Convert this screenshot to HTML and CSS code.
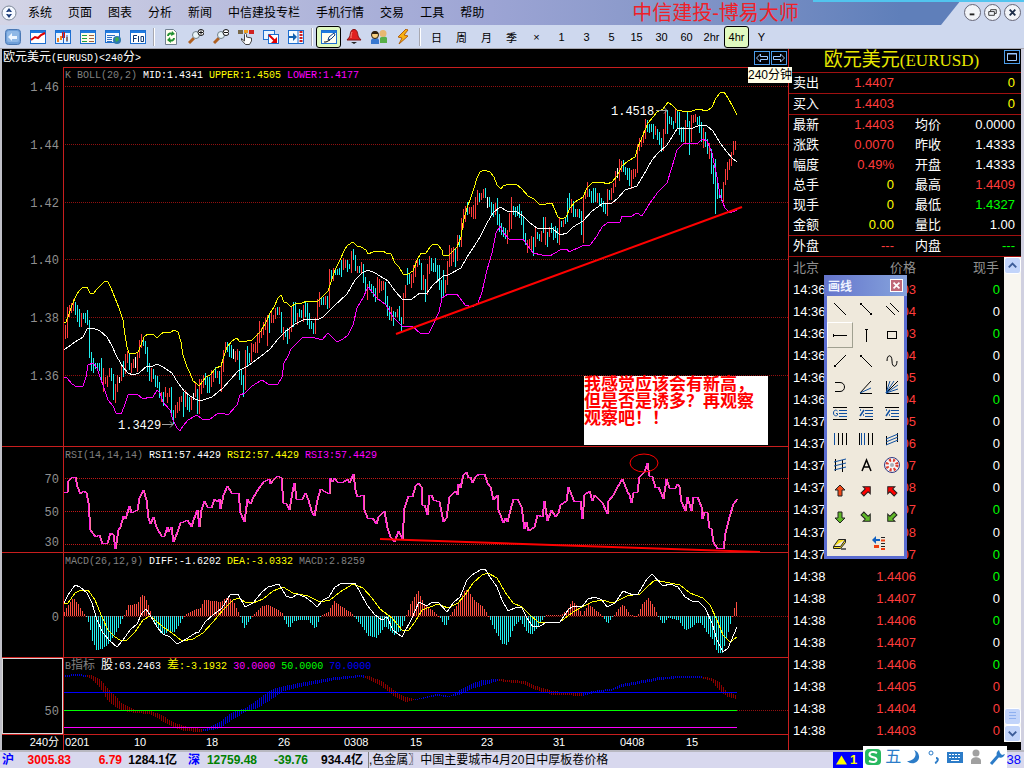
FILE: index.html
```html
<!DOCTYPE html>
<html lang="zh-CN">

<head>
    <meta charset="UTF-8">
    <meta name="viewport" content="width=device-width, initial-scale=1.0">
    <title>中信建投-博易大师</title>
    <link rel="stylesheet" href="styles.css">
</head>

<body>
    <header class="titlebar">
        <svg class="logo" viewBox="0 0 16 16"><circle cx="8" cy="8" r="7" fill="#f4f8ff" stroke="#7d8898"/><path d="M8 3l3 4H5zM8 13l3-4H5z" fill="#1a3a78"/><circle cx="8" cy="8" r="1.500" fill="#fff"/></svg>
        <nav class="menu">
            <a href="#">系统</a><a href="#">页面</a><a href="#">图表</a><a href="#">分析</a><a href="#">新闻</a><a href="#">中信建投专栏</a><a href="#">手机行情</a><a href="#">交易</a><a href="#">工具</a><a href="#">帮助</a>
        </nav>
        <h1 class="app-name">中信建投-博易大师</h1>
        <div class="win-buttons">
            <button type="button" aria-label="最小化"><svg viewBox="0 0 16 16"><path d="M5 10h5" stroke="#222" stroke-width="2"/></svg></button>
            <button type="button" aria-label="还原"><svg viewBox="0 0 16 16"><path d="M6 7V5h6v4h-2M4 7h6v4H4z" fill="none" stroke="#333"/></svg></button>
            <button type="button" aria-label="关闭"><svg viewBox="0 0 16 16"><path d="M5 5l6 6M11 5l-6 6" stroke="#1c2c48" stroke-width="2"/></svg></button>
        </div>
    </header>

    <div class="toolbar">
        <button type="button" aria-label="返回"><svg viewBox="0 0 16 16"><rect x=".5" y=".5" width="15" height="15" rx="3" fill="#6f9fd8" stroke="#4a78b4"/><rect x="2" y="2" width="12" height="11" rx="2" fill="#8fb8e6"/><path d="M3 8l4-4v3h5v3H7v2z" fill="#eef6ff"/></svg></button>
        <button type="button" aria-label="分时图"><svg viewBox="0 0 16 16"><rect x=".5" y="1.500" width="15" height="13" fill="#fff" stroke="#1e6fd0"/><path d="M1 2h14v2H1z" fill="#1e7be0"/><path d="M1 11l4-3 3 1 3-3 4-2" fill="none" stroke="#e00000" stroke-width="2"/></svg></button>
        <button type="button" aria-label="K线图"><svg viewBox="0 0 16 16"><rect x=".5" y="1.500" width="15" height="13" fill="#e8f4ff" stroke="#1e6fd0"/><path d="M1 2h14v2H1z" fill="#1e7be0"/><path d="M2 9h2v4H2zM5 7h2v4H5zM11 8h2v4h-2z" fill="#f08020"/><path d="M7 3h3v6H7z" fill="#e01010"/><path d="M8.500 2v12M12 6v7" stroke="#2060c0"/></svg></button>
        <button type="button" aria-label="报价列表"><svg viewBox="0 0 16 16"><rect x=".5" y="1.500" width="15" height="13" fill="#fffbe8" stroke="#1e6fd0"/><path d="M1 2h14v2H1z" fill="#1e7be0"/><path d="M2 6.500h5M2 9.500h5M2 12.500h5" stroke="#20a040"/><path d="M9 6.500h5M9 9.500h5M9 12.500h5" stroke="#a06040"/></svg></button>
        <button type="button" aria-label="资讯"><svg viewBox="0 0 16 16"><rect x=".5" y="1.500" width="14" height="12" fill="#f0f6ff" stroke="#1e6fd0"/><path d="M1 2h13v2H1z" fill="#1e7be0"/><path d="M2 6.500h8M2 8.500h5M2 10.500h5M2 12.500h5" stroke="#3070c0"/><circle cx="12" cy="11" r="4" fill="#2c78b0"/><path d="M10 9l3-1 1 3-3 2z" fill="#40b048"/></svg></button>
        <button type="button" aria-label="F10"><svg viewBox="0 0 16 16"><rect x=".5" y="1.500" width="15" height="13" fill="#fff" stroke="#1e6fd0"/><path d="M1 2h14v2H1z" fill="#1e7be0"/><path d="M3.500 13V6.500H7M3.500 9.500h3M8.500 7v6M11 7.500h2.500v5H11z" fill="none" stroke="#103870"/></svg></button>
        <span class="sep"></span>
        <button type="button" aria-label="刷新"><svg viewBox="0 0 16 16"><path d="M2.500.5h8l3 3v12h-11z" fill="#fffef0" stroke="#708090"/><path d="M5 7c0-3 3-3 5-2M11 9c0 3-3 3-5 2" fill="none" stroke="#209030" stroke-width="2"/><path d="M9 2l3 3-4 2zM7 8L4 11l4 3z" fill="#209030"/></svg></button>
        <button type="button" aria-label="放大"><svg viewBox="0 0 16 16"><path d="M1 14l5-5" stroke="#b06020" stroke-width="3"/><circle cx="8" cy="6" r="3.500" fill="#e8f4f8" stroke="#708088"/><circle cx="13" cy="3.500" r="3" fill="#fff" stroke="#111"/><path d="M11 3.500h4M13 1.500v4" stroke="#111"/></svg></button>
        <button type="button" aria-label="缩小"><svg viewBox="0 0 16 16"><path d="M1 14l5-5" stroke="#b06020" stroke-width="3"/><circle cx="8" cy="6" r="3.500" fill="#e8f4f8" stroke="#708088"/><circle cx="13" cy="3.500" r="3" fill="#fff" stroke="#111"/><path d="M11 3.500h4" stroke="#111"/></svg></button>
        <button type="button" aria-label="选择"><svg viewBox="0 0 16 16"><path d="M0 1h5v4H0z" fill="#786848"/><path d="M6 1h4v3H6z" fill="#f0a020"/><path d="M11 1h5v4h-5z" fill="#d02020"/><path d="M6.500 12V5.500c0-1.500 2-1.500 2 0V8l5 1v3l-2 3.500h-4L3.500 11V9.500z" fill="#fff" stroke="#444"/></svg></button>
        <button type="button" aria-label="弹出窗口"><svg viewBox="0 0 16 16"><rect x=".5" y="1.500" width="11" height="9" fill="#e8f4ff" stroke="#1e6fd0"/><rect x="5.500" y="5.500" width="10" height="9" fill="#fff" stroke="#1e6fd0"/><path d="M6 6l6 6" stroke="#e00000" stroke-width="2"/><path d="M14 8v6H8z" fill="#e00000"/></svg></button>
        <button type="button" aria-label="侧栏"><svg viewBox="0 0 16 16"><rect x=".5" y="1.500" width="15" height="13" fill="#f4faff" stroke="#1e6fd0"/><path d="M10 2v12" stroke="#1e6fd0"/><path d="M13 2v12" stroke="#d02020" stroke-width="3" stroke-dasharray="2 1"/><path d="M1 8h5" stroke="#1060b0" stroke-width="2"/><path d="M5 4l4 4-4 4z" fill="#1060b0"/></svg></button>
        <span class="sep"></span>
        <button type="button" class="active" aria-label="画线"><svg viewBox="0 0 16 16"><rect x=".5" y="1.500" width="15" height="13" fill="#fffef0" stroke="#1e6fd0"/><path d="M1 2h14v2H1z" fill="#1e7be0"/><path d="M3 13h2l4-2" fill="none" stroke="#111"/><path d="M7 11l1-3 5-4 1 2-4 4z" fill="#fff" stroke="#104080"/></svg></button>
        <button type="button" aria-label="预警"><svg viewBox="0 0 16 16"><path d="M8 .5c3 0 3.500 3 4 6 .3 2 2 3 3 4.500H1c1-1.500 2.700-2.500 3-4.500.5-3 1-6 4-6z" fill="#e02020" stroke="#801010"/><path d="M6 3c-1 2-1 4-1 6" stroke="#ff9080" fill="none"/><path d="M5 13h6l-3 2z" fill="#222"/></svg></button>
        <button type="button" aria-label="客户"><svg viewBox="0 0 16 16"><path d="M9 14V9c2-2 6-2 7 0v5z" fill="#58b048"/><circle cx="12" cy="4.500" r="3.500" fill="#e8b870"/><path d="M0 15V11c2-3 7-3 8 0v4z" fill="#3878d0"/><circle cx="4" cy="6" r="3.500" fill="#f8d080" stroke="#302010"/><path d="M.5 5c0-4 7-4 7 0z" fill="#302010"/></svg></button>
        <button type="button" aria-label="闪电下单"><svg viewBox="0 0 16 16"><path d="M10 0L2 8l4 1-3 6 9-8-4-1 4-5z" fill="#f8b010" stroke="#b06010"/></svg></button>
        <span class="sep"></span>
        <button type="button">日</button>
        <button type="button">周</button>
        <button type="button">月</button>
        <button type="button">季</button>
        <button type="button">×</button>
        <button type="button">1</button>
        <button type="button">3</button>
        <button type="button">5</button>
        <button type="button">15</button>
        <button type="button">30</button>
        <button type="button">60</button>
        <button type="button">2hr</button>
        <button type="button" class="active">4hr</button>
        <button type="button">Y</button>
    </div>

    <main class="workspace">
        <section class="charts">
            <div class="chart-title">
                <h2>欧元美元<span class="mono">(EURUSD)&lt;240</span>分<span class="mono">&gt;</span></h2>
                <button type="button" class="nav-btn" aria-label="上一周期"><svg viewBox="0 0 16 14"><rect x=".5" y=".5" width="15" height="13" fill="none" stroke="#4a9ce8"/><path d="M2.500 7l4-4v2.500h7v3h-7V11z" fill="none" stroke="#9cc8ff"/></svg></button>
                <button type="button" class="nav-btn" aria-label="下一周期"><svg viewBox="0 0 16 14"><rect x=".5" y=".5" width="15" height="13" fill="none" stroke="#4a9ce8"/><path d="M13.500 7l-4-4v2.500h-7v3h7V11z" fill="none" stroke="#9cc8ff"/></svg></button>
                <div class="tooltip">240分钟</div>
            </div>

            <div class="panel">
                <p class="legend"><span class="gray">K BOLL(20,2)</span> <span class="white">MID:1.4341</span> <span class="yellow">UPPER:1.4505</span> <span class="magenta">LOWER:1.4177</span></p>
                <svg id="kChart" viewBox="2 67 786 379"></svg>
                <div class="note">我感觉应该会有新高，<br>但是否是诱多？再观察<br>观察吧！！</div>
            </div>
            <div class="panel">
                <p class="legend"><span class="gray">RSI(14,14,14)</span> <span class="white">RSI1:57.4429</span> <span class="yellow">RSI2:57.4429</span> <span class="magenta">RSI3:57.4429</span></p>
                <svg id="rsiChart" viewBox="2 447 786 105"></svg>
            </div>
            <div class="panel">
                <p class="legend"><span class="gray">MACD(26,12,9)</span> <span class="white">DIFF:-1.6202</span> <span class="yellow">DEA:-3.0332</span> <span class="gray">MACD:2.8259</span></p>
                <svg id="macdChart" viewBox="2 553 786 104"></svg>
            </div>
            <div class="panel">
                <p class="legend"><span class="gray">B<b>指标</b></span> <span class="white"><b>股</b>:63.2463</span> <span class="yellow"><b>差</b>:-3.1932</span> <span class="magenta">30.0000</span> <span class="green">50.0000</span> <span class="blue">70.0000</span></p>
                <svg id="bChart" viewBox="2 658 786 76"></svg>
            </div>
            <div class="panel panel-time">
                <svg id="timeAxis" viewBox="2 735 786 15"></svg>
            </div>
        </section>

        <aside class="quote">
            <div class="quote-title">
                <h2>欧元美元<span>(EURUSD)</span></h2>
                <button type="button" class="max-btn" aria-label="最大化"><svg viewBox="0 0 16 14"><rect x=".5" y=".5" width="15" height="13" fill="none" stroke="#4a9ce8"/><path d="M3.500 3.500h9v7h-9z" fill="none" stroke="#9cc8ff"/><path d="M3 4h10" stroke="#9cc8ff"/></svg></button>
            </div>
            <table class="quote-table">
                <tr class="line"><th>卖出</th><td class="red">1.4407</td><th></th><td class="yellow">0</td></tr>
                <tr class="line"><th>买入</th><td class="red">1.4403</td><th></th><td class="yellow">0</td></tr>
                <tr><th>最新</th><td class="red">1.4403</td><th>均价</th><td>0.0000</td></tr>
                <tr><th>涨跌</th><td class="red">0.0070</td><th>昨收</th><td>1.4333</td></tr>
                <tr><th>幅度</th><td class="red">0.49%</td><th>开盘</th><td>1.4333</td></tr>
                <tr><th>总手</th><td class="yellow">0</td><th>最高</th><td class="red">1.4409</td></tr>
                <tr><th>现手</th><td class="yellow">0</td><th>最低</th><td class="green">1.4327</td></tr>
                <tr class="line"><th>金额</th><td class="yellow">0.00</td><th>量比</th><td>1.00</td></tr>
                <tr class="line"><th>外盘</th><td class="red">---</td><th>内盘</th><td class="green">---</td></tr>
            </table>

            <div class="ticks">
                <table class="tick-table">
                    <thead><tr><th>北京</th><th>价格</th><th>现手</th></tr></thead>
                    <tbody id="tickRows"></tbody>
                </table>
                <div class="scrollbar">
                    <button type="button" aria-label="向上滚动"><svg viewBox="0 0 16 16"><path d="M4 10l4-4 4 4" fill="none" stroke="#3c5c98" stroke-width="2"/></svg></button>
                    <div class="track"><div class="thumb"></div></div>
                    <button type="button" aria-label="向下滚动"><svg viewBox="0 0 16 16"><path d="M4 6l4 4 4-4" fill="none" stroke="#3c5c98" stroke-width="2"/></svg></button>
                </div>

                <div class="palette">
                    <div class="palette-title"><span>画线</span><button type="button" aria-label="关闭画线"><svg viewBox="0 0 13 13"><path d="M3 3l7 7M10 3l-7 7" stroke="#fff" stroke-width="2"/></svg></button></div>
                    <div class="palette-body" id="paletteBody"></div>
                </div>
            </div>
        </aside>
    </main>

    <footer class="statusbar">
        <b class="s-name">沪</b>
        <b class="s-up s-price">3005.83</b>
        <b class="s-up s-chg">6.79</b>
        <b class="s-amt">1284.1亿</b>
        <b class="s-name s-second">深</b>
        <b class="s-down s-price">12759.48</b>
        <b class="s-down s-chg">-39.76</b>
        <b class="s-amt">934.4亿</b>
        <span class="news">,色金属〗中国主要城市4月20日中厚板卷价格</span>
        <span class="alert"><svg viewBox="0 0 12 10"><path d="M6 0l6 10H0z" fill="#ff0"/></svg>1</span>
        <span class="clock">38</span>
        <div class="ime">
            <svg viewBox="0 0 18 18"><rect x="1" y="1" width="16" height="16" rx="4" fill="#28b860"/><path d="M13 5C9 3 5 4 5.500 7s7 1.500 7 4.500-4 3-7.500 1.500" fill="none" stroke="#fff" stroke-width="2"/></svg>
            <span>五</span>
            <svg viewBox="0 0 18 18"><path d="M10 2c4 5 0 11-7 11 5 5 13 1 12-5-.4-3-2-5-5-6z" fill="#2c7cc8"/></svg>
            <svg viewBox="0 0 18 18"><circle cx="6" cy="5" r="2" fill="none" stroke="#2c7cc8"/><path d="M11 10c3 0 2 4-1 5" fill="none" stroke="#2c7cc8" stroke-width="2"/></svg>
            <svg viewBox="0 0 18 18"><rect x="1" y="4" width="16" height="11" fill="#2c7cc8"/><path d="M3 6.500h12M3 9.500h12" stroke="#fff" stroke-dasharray="2 1"/><path d="M5 12.500h8" stroke="#fff"/></svg>
            <svg viewBox="0 0 18 18"><circle cx="9" cy="5" r="3.500" fill="#a0a0a0"/><path d="M4 16v-3c0-5 10-5 10 0v3z" fill="#a0a0a0"/></svg>
            <svg viewBox="0 0 18 18"><path d="M3 16l7-8" stroke="#2c7cc8" stroke-width="3"/><path d="M11 2c-3 2-3 5-1 7 3 2 6 0 7-3l-3 1-2-2z" fill="#2c7cc8"/></svg>
        </div>
    </footer>

    <script src="script.js"></script>
</body>

</html>
```

FILE: styles.css
```css
* {
    box-sizing: border-box;
}

body {
    margin: 0;
    height: 100vh;
    display: flex;
    flex-direction: column;
    overflow: hidden;
    background-color: #000;
    color: #000;
    font-family: "Liberation Sans", "Noto Sans CJK SC", sans-serif;
    font-size: 12px;
}

h1, h2, p {
    margin: 0;
    font-weight: normal;
}

button {
    border: none;
    padding: 0;
    background: none;
    font-family: inherit;
    font-size: 12px;
    cursor: pointer;
}

svg {
    display: block;
}

/* 标题栏 */
.titlebar {
    position: relative;
    flex: none;
    height: 25px;
    display: flex;
    align-items: center;
    padding-left: 1px;
    background: linear-gradient(to right, #d4d5e6 0, #c2c5e0 15%, #9ca4d4 48%, #8b9acb 62%, #5f7fba 88%);
}

.titlebar::after {
    content: "";
    position: absolute;
    top: 0;
    right: 0;
    width: 83px;
    height: 25px;
    background-color: #ced8ee;
    clip-path: polygon(20px 0, 100% 0, 100% 100%, 0 100%);
}

.titlebar::before {
    content: "";
    position: absolute;
    top: 0;
    right: 0;
    width: 211px;
    height: 2px;
    background-color: #52c4ee;
    z-index: 1;
}

.logo {
    width: 16px;
    height: 16px;
    margin-right: 11px;
}

.menu {
    display: flex;
    gap: 16px;
}

.menu a {
    color: #000;
    text-decoration: none;
    line-height: 24px;
}

.app-name {
    flex: 1;
    padding-left: 148px;
    color: #f02028;
    font-size: 20px;
    line-height: 24px;
    white-space: nowrap;
}

.win-buttons {
    position: relative;
    z-index: 1;
    display: flex;
    gap: 3px;
    padding-right: 3px;
}

.win-buttons button {
    width: 17px;
    height: 17px;
    border: 1px solid #667;
    border-radius: 50%;
    background-color: #f2f4f8;
}

/* 工具栏 */
.toolbar {
    flex: none;
    height: 24px;
    display: flex;
    align-items: center;
    background-color: #ced8ee;
    border-bottom: 1px solid #a8a8b0;
}

.toolbar button {
    flex: none;
    width: 25px;
    height: 22px;
    display: flex;
    align-items: center;
    justify-content: center;
    font-size: 11px;
}

.toolbar svg {
    width: 16px;
    height: 16px;
}

.toolbar .active {
    border: 1px solid #000;
    border-radius: 3px;
    background-color: #e0fac0;
}

.sep {
    flex: none;
    width: 8px;
    height: 18px;
    border-left: 3px solid transparent;
    background: linear-gradient(to right, #a8a8b0 1px, #fff 1px, #fff 2px, transparent 2px) no-repeat;
}

/* 主区域 */
.workspace {
    flex: 1;
    min-height: 0;
    display: flex;
    border-left: 2px solid #c0c0c8;
    border-right: 3px solid #d0d0e0;
}

.charts {
    flex: 1;
    min-width: 0;
    display: grid;
    grid-template-rows: 18px 380fr 106fr 105fr 77fr 15fr;
    border-right: 1px solid #c81e1e;
}

.chart-title {
    position: relative;
    display: flex;
    align-items: center;
    padding: 0 1px;
    color: #fff;
}

.chart-title h2 {
    flex: 1;
    font-size: 12px;
    line-height: 18px;
}

.mono {
    font-family: "Liberation Mono", monospace;
    font-size: 10px;
}

.nav-btn {
    width: 16px;
    height: 14px;
    margin-left: 1px;
}

.tooltip {
    position: absolute;
    top: 18px;
    right: -4px;
    z-index: 3;
    background-color: #ffffe8;
    color: #000;
    line-height: 16px;
}

.panel {
    position: relative;
    min-height: 0;
    border-bottom: 1px solid #c81e1e;
}

.panel svg {
    width: 100%;
    height: 100%;
}

.panel-time {
    border-bottom: none;
}

.legend {
    position: absolute;
    top: 2px;
    left: 63px;
    font-family: "Liberation Mono", "Noto Sans CJK SC", monospace;
    font-size: 10px;
    line-height: 14px;
    white-space: nowrap;
}

.legend b {
    font-size: 12px;
    font-weight: normal;
    line-height: 12px;
}

.gray { color: #808080; }
.white { color: #fff; }
.yellow { color: #ff0; }
.magenta { color: #f0f; }
.green { color: #0f0; }
.blue { color: #00f; }
.red { color: #ff3c3c; }

.note {
    position: absolute;
    right: 20px;
    bottom: 1px;
    width: 184px;
    height: 69px;
    background-color: #fff;
    color: #f00;
    font-size: 17px;
    font-weight: bold;
    line-height: 17px;
    white-space: nowrap;
}

.axis-text {
    font-family: "Liberation Mono", monospace;
    font-size: 12px;
    fill: #909090;
}

.time-text {
    font-family: "Liberation Sans", "Noto Sans CJK SC", sans-serif;
    font-size: 11px;
    fill: #fff;
}

/* 右侧报价 */
.quote {
    flex: none;
    width: 232px;
    display: flex;
    flex-direction: column;
    color: #fff;
}

.quote-title {
    flex: none;
    height: 24px;
    display: flex;
    border-bottom: 1px solid #a01010;
}

.quote-title h2 {
    flex: 1;
    padding-left: 10px;
    text-align: center;
    color: #e8e800;
    font-size: 19px;
    line-height: 22px;
}

.quote-title h2 span {
    font-family: "Liberation Serif", serif;
    font-size: 17px;
}

.max-btn {
    width: 16px;
    height: 14px;
    margin: 1px 1px 0 0;
}

.quote-table, .tick-table {
    border-collapse: separate;
    border-spacing: 0;
    table-layout: fixed;
    font-size: 13px;
    line-height: 16px;
}

.quote-table {
    width: 100%;
}

.quote-table th, .quote-table td {
    height: 20px;
    padding: 0;
}

.quote-table .line th, .quote-table .line td {
    height: 21px;
    border-bottom: 1px solid #a01010;
}

.quote-table th {
    width: 40px;
    padding-left: 4px;
    font-weight: normal;
    text-align: left;
}

.quote-table th:nth-child(3) {
    width: 66px;
    padding-left: 21px;
}

.quote-table td {
    text-align: right;
}

.quote-table td:nth-child(2) {
    width: 65px;
}

.quote-table td:last-child {
    padding-right: 6px;
}

.ticks {
    position: relative;
    flex: 1;
    min-height: 0;
    display: flex;
    padding-bottom: 8px;
}

.tick-table {
    flex: 1;
    height: 100%;
}

.tick-table th, .tick-table td {
    height: 22px;
    padding: 0;
    text-align: right;
}

.tick-table th {
    font-weight: normal;
    color: #909090;
}

.tick-table th:first-child, .tick-table td:first-child {
    width: 50px;
    padding-left: 4px;
    text-align: left;
}

.tick-table th:nth-child(2), .tick-table td:nth-child(2) {
    width: 77px;
}

.tick-table th:last-child {
    padding-right: 5px;
}

.tick-table td:last-child {
    padding-right: 4px;
}

.scrollbar {
    width: 17px;
    display: flex;
    flex-direction: column;
    background-color: #f8f6f0;
}

.scrollbar button, .thumb {
    flex: none;
    height: 17px;
    border: 1px solid #fff;
    border-radius: 3px;
    background-color: #c2d4fa;
}

.track {
    flex: 1;
    display: flex;
    flex-direction: column;
    justify-content: flex-end;
}

.thumb {
    background-image: repeating-linear-gradient(#8fb0f0 0 1px, transparent 1px 3px);
    background-size: 7px 9px;
    background-position: center;
    background-repeat: no-repeat;
}

/* 画线工具箱 */
.palette {
    position: absolute;
    top: 18px;
    left: 35px;
    width: 83px;
    border: 3px solid #5a6cd0;
    border-top: none;
    background-color: #efe9dc;
}

.palette-title {
    height: 21px;
    margin: 0 -3px;
    padding: 0 4px;
    display: flex;
    align-items: center;
    justify-content: space-between;
    background: linear-gradient(to right, #6474cc, #86a4dc);
    color: #eef2ff;
    font-weight: bold;
}

.palette-title button {
    width: 13px;
    height: 13px;
    border: 1px solid #fff;
    background-color: #c06878;
}

.palette-title svg {
    width: 11px;
    height: 11px;
}

.palette-body {
    display: grid;
    grid-template-columns: repeat(3, 26px);
    grid-auto-rows: 26px;
}

.palette-body button {
    display: flex;
    align-items: center;
    justify-content: center;
}

.palette-body button:nth-child(4) {
    border: 1px solid #fff;
    border-right-color: #a0a090;
    border-bottom-color: #a0a090;
}

.palette-body button:last-child {
    grid-column: span 2;
}

.palette-body svg {
    flex: none;
    width: 18px;
    height: 18px;
}

/* 状态栏 */
.statusbar {
    position: relative;
    flex: none;
    height: 18px;
    display: flex;
    align-items: center;
    padding-left: 2px;
    border-top: 2px solid #b8b8c0;
    background-color: #d8d8ee;
    line-height: 16px;
    white-space: nowrap;
}

.s-name { width: 14px; color: #00f; }
.s-second { margin-left: 11px; }
.s-up { color: #f00; }
.s-down { color: #008000; }
.s-price { width: 55px; text-align: right; }
.s-chg { width: 51px; text-align: right; }
.s-amt { width: 55px; text-align: right; }

.news {
    flex: 1;
    margin-left: 5px;
    border-left: 1px solid #808080;
}

.alert {
    width: 30px;
    height: 16px;
    display: flex;
    align-items: center;
    gap: 3px;
    padding-left: 3px;
    background-color: #00f;
    color: #ff0;
    font-size: 13px;
    font-weight: bold;
}

.alert svg {
    width: 11px;
    height: 10px;
}

.clock {
    width: 161px;
    padding-right: 3px;
    text-align: right;
    color: #00f;
    font-size: 13px;
}

.ime {
    position: absolute;
    right: 17px;
    bottom: 0;
    width: 144px;
    height: 22px;
    display: flex;
    align-items: center;
    justify-content: space-around;
    background-color: #fff;
    color: #2c7cc8;
    font-size: 16px;
}

.ime svg {
    width: 18px;
    height: 18px;
}
```

FILE: script.js
```js
const NS = 'http://www.w3.org/2000/svg';

function add(svg, tag, attrs, text) {
    const el = document.createElementNS(NS, tag);
    for (const k in attrs) el.setAttribute(k, attrs[k]);
    if (text) el.textContent = text;
    svg.appendChild(el);
    return el;
}

function polyline(svg, points, color) {
    return add(svg, 'polyline', { points: points, fill: 'none', stroke: color, 'shape-rendering': 'crispEdges' });
}

function grid(svg, y, color) {
    add(svg, 'path', { d: `M65 ${y}.5H788`, stroke: color, 'stroke-dasharray': '1 1', 'shape-rendering': 'crispEdges' });
}

function axis(svg, y1, y2) {
    add(svg, 'path', { d: `M63.5 ${y1}V${y2}`, stroke: '#c81e1e' });
}

function label(svg, x, y, text, anchor, cls) {
    return add(svg, 'text', { x: x, y: y, 'text-anchor': anchor, class: cls || 'axis-text' }, text);
}

function bar(svg, x, y1, y2, color) {
    add(svg, 'rect', { x: x, y: Math.min(y1, y2), width: 1, height: Math.max(1, Math.abs(y2 - y1)), fill: color });
}

// 在控制点之间线性插值
function interp(list, x, col) {
    for (let i = 1; i < list.length; i++) {
        if (x <= list[i][0]) {
            const a = list[i - 1], b = list[i];
            return a[col] + (b[col] - a[col]) * (x - a[0]) / (b[0] - a[0]);
        }
    }
    return list[list.length - 1][col];
}

// K线 r 涨 c 跌 w 平
const bars = `r325-339 r307-338 r305-317 r303-313 r299-311 c302-315 c305-322 c309-327 r313-327 c313-319 c313-323 c310-325
c320-358 c352-371 c358-373 c363-369 c363-368 c363-371 c358-383 r368-392 r377-384 r376-387 r368-377 c368-381 c374-400 r384-403
r375-392 w377-383 r365-381 c361-377 r354-374 r351-363 c353-370 r363-373 r359-368 w357-368 r352-372 r340-358 r334-348 c337-346
c341-354 c347-372 c363-381 r368-382 c369-379 c375-387 c376-388 c382-398 r392-402 c392-406 r387-397 r393-403 r388-397 c387-413
c410-424 r405-418 r402-413 r397-411 r396-402 c392-417 r390-407 c395-410 c397-412 r396-410 w393-400 r383-397 c389-414 r379-414
r379-394 r375-388 c373-385 c377-393 c377-393 r370-387 r370-382 c367-378 r371-378 c371-384 r363-392 r350-372 r342-353 c342-352
c344-357 c345-358 w349-359 r351-362 r349-360 c351-380 c370-385 c375-397 r350-390 c346-366 c353-363 r343-362 r344-352 r342-353
r333-353 r321-343 r328-338 r322-335 r318-330 r315-346 c313-333 r310-323 r315-323 r308-319 c307-315 r307-315 c312-333 r327-340
c330-337 c328-344 r327-339 r307-332 c302-327 c302-322 r313-325 c309-317 c310-318 r305-322 c302-317 c303-325 c313-329 c321-329
c323-334 r318-334 r299-320 r292-307 c297-305 c297-305 r296-305 c296-309 r269-308 c270-282 r268-281 c268-275 c269-275 c268-275
c260-277 r258-270 r260-268 c260-272 c264-269 r251-273 c249-260 c255-271 r266-273 c266-273 r262-273 c264-283 c277-293 r284-300
c281-290 c284-293 c286-297 c288-302 r277-300 r279-293 r281-291 r281-290 c282-305 c296-316 c306-320 r307-321 c311-326 c312-317
r309-317 c306-321 c317-332 r293-324 r285-298 c268-285 c274-284 r274-288 r265-283 r261-277 r258-267 c259-265 c263-290 r275-290
c279-302 r264-295 r256-274 c258-271 c263-272 c258-272 c265-280 c265-290 c280-298 c270-298 r280-293 r261-285 r245-267 r248-266
r247-262 c249-267 r235-261 c235-247 r218-247 r209-228 r206-222 c202-215 r207-214 r207-217 r205-219 r197-219 r190-205 c193-202
r193-200 r189-198 c188-198 w197-208 c197-207 c202-215 c204-217 r203-215 c198-225 c214-232 c223-235 c227-237 c228-239 r230-244
r213-232 r197-229 c206-215 c207-217 c206-216 c204-218 c211-225 c217-240 c233-245 r240-253 r239-248 r236-250 c237-256 r226-247
c232-239 c234-241 r231-242 c217-233 r217-245 c232-247 r227-237 c223-233 c227-240 c226-238 c228-243 r217-245 c221-227 r220-227
c217-224 c198-222 c193-209 r199-213 c201-217 c209-217 r209-217 c209-218 c211-235 r196-243 r190-199 r182-197 c189-197 c191-203
c188-203 c188-202 r193-203 c193-205 c198-207 c201-212 c204-214 r189-216 c190-200 r188-200 r183-193 r171-187 w168-178 r159-181
r161-172 c160-172 c167-175 c168-180 c168-186 r170-189 r169-179 r169-177 r144-173 r138-151 r138-147 r131-143 r119-139 c120-132
c124-133 c124-132 c124-139 r126-135 c129-140 c132-145 c138-152 r129-151 r110-134 c110-134 c116-124 c117-125 c121-129 r109-123
c110-128 c112-135 c127-142 c127-142 r120-143 c112-127 c121-155 r115-142 r115-123 r114-122 c117-125 c116-133 c122-142 r128-148
c132-147 c139-154 r143-159 c149-174 c165-184 c159-214 c183-199 c190-198 c189-201 r182-202 r169-185 r162-180 r159-170 r152-166
r141-155 r141-150`.split(/\s+/);

const upper = '64,323 66,322 69,314 72,305 76,296 79,291 83,287 87,287 90,293 94,293 97,289 101,285 105,281 108,282 111,288 115,298 119,308 123,320 125,335 127,347 129,353 134,354 138,352 141,345 144,337 148,334 153,334 157,338 160,335 164,332 171,332 174,330 178,332 181,342 183,355 187,367 190,373 193,381 197,384 199,386 203,381 206,377 210,375 216,368 221,366 223,359 227,347 232,341 237,338 240,342 247,341 252,340 257,335 261,331 266,322 270,313 274,307 278,298 281,295 284,302 287,303 291,307 295,304 302,303 307,301 318,301 323,296 328,291 331,282 335,270 340,260 345,249 348,245 353,242 357,246 361,247 366,250 368,254 373,252 377,251 383,251 386,253 391,254 395,263 399,267 403,274 408,274 413,271 417,260 421,253 426,253 430,247 433,244 438,245 442,250 443,255 448,256 453,251 457,247 461,237 463,223 467,208 471,197 474,188 477,178 480,172 484,170 490,172 494,177 497,185 501,189 503,186 509,184 516,184 522,189 528,196 534,199 540,205 552,203 554,208 558,217 562,219 566,217 570,208 575,202 583,197 587,188 592,183 602,182 607,184 612,182 617,176 622,166 628,161 635,157 638,147 643,135 648,123 653,117 657,112 663,109 668,102 673,106 677,110 682,111 692,111 698,109 707,111 712,107 716,98 720,93 724,92 728,98 733,107 737,115';
const middle = '64,350 68,347 75,342 83,337 87,329 93,328 100,331 107,337 112,346 117,357 123,367 128,373 133,375 139,373 147,366 153,366 157,364 163,367 172,373 178,383 185,392 193,398 200,401 212,397 223,388 230,380 238,371 248,366 260,357 270,349 278,339 285,332 295,324 305,319 317,320 323,317 333,307 347,294 355,280 362,273 368,270 375,273 380,276 388,281 395,291 403,300 412,299 420,293 427,293 433,285 443,276 448,275 461,268 467,257 473,248 480,237 487,223 493,213 500,207 507,211 517,212 523,216 530,223 537,228 545,229 552,228 560,235 567,233 573,227 583,221 592,211 602,204 612,203 618,198 625,190 637,186 643,176 652,160 658,153 667,145 677,129 682,128 693,128 700,125 707,126 713,131 720,143 727,152 732,158 737,162';
const lower = '64,377 67,378 72,384 77,387 83,386 86,377 88,365 93,363 97,368 100,377 104,388 108,400 113,406 116,413 121,414 124,407 128,395 137,394 143,399 150,397 153,397 157,390 160,393 163,402 170,410 173,420 177,428 180,431 183,426 188,420 197,415 202,419 209,420 217,414 222,413 228,415 237,405 240,395 245,393 252,386 262,380 268,384 278,384 282,377 284,363 288,356 291,349 297,343 303,337 312,337 322,340 328,333 337,342 343,339 348,335 353,325 357,308 363,298 368,287 373,293 377,298 386,305 393,317 402,326 413,327 420,333 429,333 433,325 439,312 442,298 448,294 457,294 465,305 472,307 478,303 482,292 487,270 492,253 496,233 500,226 503,232 509,239 523,239 528,246 533,253 542,255 550,256 560,250 567,249 569,252 582,246 590,245 597,236 602,227 607,223 620,222 622,216 632,216 637,213 642,216 650,203 658,192 667,183 672,167 677,150 683,144 698,143 702,139 707,141 712,153 717,177 720,195 725,208 730,213 737,210';

const k = document.getElementById('kChart');
add(k, 'path', { d: 'M63 67.5H788', stroke: '#c81e1e' });
axis(k, 67, 446);
['1.46', '1.44', '1.42', '1.40', '1.38', '1.36'].forEach((t, i) => {
    const y = [86, 144, 202, 259, 317, 375][i];
    grid(k, y, '#901010');
    label(k, 59, y + 5, t, 'end');
});
bars.forEach((b, i) => {
    const [hi, lo] = b.slice(1).split('-').map(Number);
    bar(k, 65 + i * 2, hi, lo, { r: '#ff3c3c', c: '#20f0f0', w: '#fff' }[b[0]]);
});
polyline(k, upper, '#ff0');
polyline(k, lower, '#f0f');
polyline(k, middle, '#fff');
label(k, 118, 429, '1.3429', 'start').style.fill = '#fff';
label(k, 611, 115, '1.4518', 'start').style.fill = '#fff';
add(k, 'path', { d: 'M162 424.5h11m-3-3l3 3-3 3M656 110.5h11m-3-3l3 3-3 3', fill: 'none', stroke: '#a0a0a0' });
add(k, 'path', { d: 'M396 334L742 207', stroke: '#f00', 'stroke-width': 2 });

const rsi = document.getElementById('rsiChart');
axis(rsi, 447, 552);
[[478, '70', 483], [511, '50', 516], [544, '30', 546]].forEach(([y, t, ty]) => {
    grid(rsi, y, '#c01818');
    label(rsi, 59, ty, t, 'end');
});
const rsiLine = '64,492 67,492 68,481 71,478 75,477 77,487 80,494 83,491 86,493 88,503 90,530 95,537 99,535 102,544 107,543 110,533 113,535 115,549 118,530 120,527 123,516 125,519 129,506 131,513 137,510 139,498 143,490 146,500 148,518 150,524 153,517 156,527 161,536 164,536 167,527 168,532 171,527 173,542 177,532 180,523 183,522 187,520 191,527 193,520 197,510 199,527 201,510 204,501 207,507 211,508 214,499 217,502 219,499 220,509 223,495 227,486 231,493 238,493 240,513 244,522 247,499 250,504 253,497 258,489 263,482 269,479 270,484 273,480 277,476 281,478 283,503 286,504 289,510 292,492 294,483 296,499 302,499 305,493 308,500 311,511 314,516 317,500 320,489 325,492 329,494 330,478 332,482 334,478 337,482 342,483 347,479 349,483 353,474 355,490 357,497 363,495 364,510 367,518 372,518 376,524 378,517 384,511 387,528 390,537 394,542 398,531 402,539 404,508 408,496 412,497 415,486 418,483 421,487 422,505 424,505 427,515 429,495 431,495 433,500 439,502 441,512 443,522 446,518 449,497 455,491 457,495 458,484 460,488 463,475 466,472 468,478 470,477 472,483 475,477 479,474 484,474 487,483 490,487 493,500 497,495 498,510 503,523 505,518 507,522 510,510 513,499 517,499 521,507 524,529 526,522 528,531 534,527 537,515 542,517 544,501 547,521 551,510 555,517 558,513 560,505 566,501 568,487 571,495 574,502 580,501 582,519 584,495 589,491 592,501 594,495 602,503 607,514 608,501 613,495 617,487 622,479 627,492 629,495 631,503 633,493 637,492 639,477 644,472 647,463 649,476 652,477 655,488 658,487 663,499 666,479 669,488 675,488 677,484 679,487 681,502 685,511 687,497 691,511 693,497 697,497 701,507 702,519 704,512 707,513 709,528 711,529 713,542 717,549 720,548 723,549 725,533 729,517 733,504 737,499';
// RSI1 与 RSI3 重合, 错开一个像素
polyline(rsi, rsiLine, '#ff70a0').setAttribute('transform', 'translate(1 0)');
polyline(rsi, rsiLine, '#ff20e0');
add(rsi, 'path', { d: 'M380 539L760 552', stroke: '#f00', 'stroke-width': 2 });
add(rsi, 'ellipse', { cx: 644, cy: 463, rx: 14, ry: 9, fill: 'none', stroke: '#f00' });

const macd = document.getElementById('macdChart');
axis(macd, 553, 657);
grid(macd, 616, '#901010');
label(macd, 59, 621, '0', 'end');
const hist = [[64, 4], [68, 11], [73, 18], [78, 12], [83, 3], [86, -1], [89, -8], [92, -25], [96, -34], [102, -33], [108, -28], [115, -18], [120, -8], [124, 1], [128, 11], [137, 12], [140, 19], [143, 22], [147, 14], [151, 2], [155, -9], [160, -17], [163, -19], [168, -15], [174, -16], [180, -7], [185, 2], [192, 5], [200, 8], [204, 16], [215, 15], [220, 14], [228, 19], [233, 15], [238, 4], [241, -4], [244, -12], [249, -4], [255, 3], [262, 10], [267, 11], [275, 8], [282, 3], [285, -7], [289, -13], [293, -5], [300, -4], [308, -4], [315, -13], [321, 1], [328, 4], [334, 15], [340, 10], [350, 4], [356, -3], [362, -11], [368, -20], [376, -22], [385, -10], [394, -19], [400, -15], [405, -2], [410, 12], [418, 25], [424, 11], [432, 6], [440, -2], [445, -11], [450, 1], [457, 11], [464, 25], [467, 26], [474, 16], [483, 9], [488, 0], [493, -11], [502, -28], [507, -29], [514, -10], [520, -4], [526, -15], [531, -19], [537, -12], [541, -5], [546, 1], [560, 1], [566, 5], [572, 15], [577, 10], [582, 1], [588, 12], [594, 7], [601, 1], [607, -8], [613, 0], [618, 7], [623, 12], [630, 1], [637, 0], [642, 12], [648, 18], [653, 11], [658, -1], [663, -8], [668, -2], [678, -4], [685, -14], [691, -12], [696, -7], [701, -7], [706, -16], [712, -23], [717, -37], [722, -37], [727, -20], [732, 0], [734, 8], [737, 17]];
for (let x = 64; x <= 736; x += 2) {
    const v = Math.round(interp(hist, x, 1));
    bar(macd, x, 616, 616 - v, v >= 0 ? '#ff4c40' : '#20f0f0');
}
polyline(macd, '64,604 68,603 75,593 81,590 88,590 95,600 102,617 108,630 115,637 120,640 127,640 135,632 143,620 150,616 155,620 163,627 172,633 182,641 193,639 203,633 213,622 223,610 233,600 239,598 245,602 253,603 263,599 273,591 283,587 293,593 308,596 320,602 330,600 340,592 353,584 363,588 372,598 380,609 392,618 402,630 408,631 415,622 422,610 430,607 438,604 448,608 458,603 465,595 473,583 482,575 488,573 497,578 505,592 513,603 522,607 530,615 538,622 547,623 560,622 573,612 582,607 592,602 602,600 613,603 627,596 640,594 647,587 655,580 670,583 680,585 690,593 703,598 710,605 717,620 723,635 730,642 737,637', '#ff0');
polyline(macd, '64,603 68,595 75,585 80,587 87,593 92,603 97,620 103,633 110,641 117,647 123,640 130,630 137,624 142,613 146,609 150,615 157,627 163,634 170,637 177,644 183,641 197,632 199,632 205,622 213,615 222,608 230,595 238,594 245,607 253,603 262,592 268,587 279,584 286,596 292,598 297,594 305,597 312,602 317,607 323,600 329,597 335,587 342,583 355,583 360,592 367,605 375,615 382,620 387,617 393,630 402,637 412,618 419,602 427,606 432,602 438,602 447,612 453,603 460,597 467,580 472,575 480,570 485,569 490,577 497,587 502,600 508,611 517,607 522,608 527,618 533,627 540,626 547,622 560,622 568,610 573,606 582,607 588,599 595,597 602,600 607,607 615,603 623,591 633,595 638,594 647,579 652,574 663,586 670,584 678,587 685,597 692,601 698,601 705,608 712,623 717,640 723,652 728,648 737,627', '#fff');

const b = document.getElementById('bChart');
axis(b, 658, 734);
add(b, 'rect', { x: 2.5, y: 658.5, width: 60, height: 75, fill: 'none', stroke: '#d8d8d8' });
label(b, 59, 715, '50', 'end');
grid(b, 710, '#901010');
const band = [[64, 675, 677], [77, 674, 676], [87, 675, 677], [92, 675, 680], [100, 680, 688], [107, 688, 700], [115, 696, 707], [122, 704, 711], [135, 710, 713], [150, 711, 714], [160, 714, 720], [172, 722, 727], [184, 726, 731], [200, 729, 732], [205, 729, 731], [218, 723, 729], [230, 713, 721], [245, 708, 712], [257, 700, 708], [270, 690, 700], [283, 686, 691], [305, 682, 686], [335, 677, 680], [360, 675, 677], [368, 676, 679], [381, 681, 686], [396, 692, 698], [405, 697, 702], [415, 699, 700], [437, 694, 696], [448, 696, 697], [458, 691, 695], [468, 685, 690], [481, 680, 686], [497, 679, 681], [524, 681, 684], [536, 686, 690], [552, 691, 695], [565, 692, 695], [581, 693, 696], [598, 690, 692], [610, 689, 691], [622, 684, 687], [643, 680, 683], [659, 677, 680], [680, 676, 678], [700, 676, 678], [711, 678, 681], [719, 682, 690], [727, 692, 697], [736, 695, 699]];
const rising = [[64, 86], [203, 364], [414, 498], [582, 701]];
for (let x = 65; x <= 736; x += 2) {
    const up = rising.some(r => x >= r[0] && x <= r[1]);
    bar(b, x, Math.round(interp(band, x, 1)), Math.round(interp(band, x, 2)), up ? '#0000d8' : '#8c0000');
}
[[692, '#00f'], [710, '#0f0'], [727, '#f0f']].forEach(([y, color]) => {
    add(b, 'path', { d: `M64 ${y}.5H737`, stroke: color });
});

const time = document.getElementById('timeAxis');
axis(time, 735, 750);
label(time, 59, 746, '240分', 'end', 'time-text');
[[65, '0201'], [134, '10'], [206, '18'], [278, '26'], [344, '0308'], [410, '15'], [481, '23'], [553, '31'], [620, '0408'], [686, '15']].forEach(([x, t]) => {
    label(time, x, 746, t, 'start', 'time-text');
});

// 成交明细: 时间 价格 现手颜色
const ticks = [
    ['14:36', '1.4403', 'green'], ['14:36', '1.4404', 'white'], ['14:36', '1.4403', 'green'],
    ['14:36', '1.4404', 'white'], ['14:36', '1.4405', 'white'], ['14:36', '1.4404', 'green'],
    ['14:37', '1.4405', 'white'], ['14:37', '1.4406', 'white'], ['14:37', '1.4407', 'white'],
    ['14:37', '1.4408', 'white'], ['14:37', '1.4407', 'green'], ['14:37', '1.4408', 'white'],
    ['14:37', '1.4407', 'green'], ['14:38', '1.4406', 'green'], ['14:38', '1.4407', 'white'],
    ['14:38', '1.4406', 'green'], ['14:38', '1.4407', 'white'], ['14:38', '1.4406', 'green'],
    ['14:38', '1.4405', 'red'], ['14:38', '1.4404', 'red'], ['14:38', '1.4403', 'red']
];
document.getElementById('tickRows').innerHTML = ticks.map(t =>
    `<tr><td>${t[0]}</td><td class="red">${t[1]}</td><td class="${t[2]}">0</td></tr>`).join('');

const arrow = 'M9 3l5 5h-3v6H7V8H4z';
const arrowIcon = (deg, color) => `<path d="${arrow}" transform="rotate(${deg} 9 9)" fill="${color}" stroke="#222"/>`;
const levels = head => `<path d="M2 3.500h14M2 15.500h14" stroke="#000"/><path d="M8 6.500h8M8 9.500h8M8 12.500h8" stroke="#1050a0"/>${head}`;
const percent = '<path d="M3 12l4-6M3 6h1M6 11h1" fill="none" stroke="#1050a0" stroke-width="1.5"/>';
const tools = [
    ['直线', '<path d="M3 3l12 12" stroke="#000"/>'],
    ['线段', '<path d="M4 4l10 10" stroke="#000"/><path d="M3 3h2v2H3zM13 13h2v2h-2z"/>'],
    ['平行线', '<path d="M3 6l9 9M7 3l9 9" stroke="#000"/>'],
    ['水平线', '<path d="M2 9.500h14M2.500 8v3" stroke="#000"/>'],
    ['垂直线', '<path d="M9.500 3v13M8 3.500h3" stroke="#000"/>'],
    ['矩形', '<rect x="4.500" y="5.500" width="9" height="7" fill="none" stroke="#000"/>'],
    ['射线', '<path d="M4 14L15 3" stroke="#000"/><path d="M3 13h2v2H3z"/>'],
    ['反射线', '<path d="M4 4l11 11" stroke="#000"/><path d="M3 3h2v2H3z"/>'],
    ['曲线', '<path d="M4 9c0-7 5-7 5 0s5 7 5 0" fill="none" stroke="#000"/>'],
    ['弧线', '<path d="M4 4.500h5c6 0 6 9 0 9H4" fill="none" stroke="#000"/>'],
    ['角度线', '<path d="M3 15.500h12M3 15L14 3" stroke="#000"/><path d="M3 15l11-5" stroke="#1050a0"/>'],
    ['甘氏线', '<path d="M3.500 3v12.500H16M3 15L15 3" fill="none" stroke="#000"/><path d="M3 15L7 3M3 15L11 3M3 15l12-8M3 15l12-4" stroke="#1050a0"/>'],
    ['黄金分割', levels('<path d="M6.500 7C5 5.500 2.500 6 2.500 9s3 3.500 4 2V9.500H5" fill="none" stroke="#1050a0"/>')],
    ['百分比线', levels(percent)],
    ['波段线', levels(percent)],
    ['周期线', '<path d="M3.500 3v12M7.500 3v12M11.500 3v12M15.500 3v12" stroke="#000"/><path d="M3.500 3v12" stroke="#1050a0"/>'],
    ['斐波那契', '<path d="M2.500 3v12M4.500 3v12M11.500 3v12M15.500 3v12" stroke="#000"/><path d="M4.500 3v12M7.500 3v12" stroke="#1050a0"/>'],
    ['回归通道', '<path d="M3.500 6v9M14.500 3v9" stroke="#000"/><path d="M3 9l12-5M3 12l12-5M3 15l12-5" stroke="#1050a0"/>'],
    ['等距通道', '<path d="M4.500 3v12M11.500 4v12" stroke="#000"/><path d="M3 6l12-3M3 10l12-3M3 14l12-3" stroke="#1050a0"/>'],
    ['文字', '<path d="M5 15L9.500 4 14 15M6.500 11h6" fill="none" stroke="#000" stroke-width="1.500"/>'],
    ['圆周', '<circle cx="9" cy="9" r="7.500" fill="#f4f4f4" stroke="#303880"/><circle cx="9" cy="9" r="5" fill="none" stroke="#e04030" stroke-width="3" stroke-dasharray="2 2"/><circle cx="9" cy="9" r="2" fill="#aab0b8"/>'],
    ['上箭头', arrowIcon(0, '#f04818')],
    ['右上箭头', arrowIcon(45, '#f00')],
    ['左上箭头', arrowIcon(-45, '#f00')],
    ['下箭头', arrowIcon(180, '#60b828')],
    ['右下箭头', arrowIcon(135, '#60b828')],
    ['左下箭头', arrowIcon(225, '#60b828')],
    ['橡皮', '<path d="M2.500 12.500l5-7h7l-5 7zM2.500 12.500v2h7l5-6v-3" fill="#f8e020" stroke="#222"/><path d="M10 15h5" stroke="#666" stroke-width="2"/>'],
    ['清除', '<path d="M2 6l4-4v3h4v2H6v3z" fill="#1060c0"/><path d="M4 11h5v3H4z" fill="#f04010"/><path d="M11 3.500h4M11 9.500h4M11 12.500h4" stroke="#222"/><path d="M11 6.500h4M11 15h4" stroke="#f04010" stroke-width="2"/>']
];
document.getElementById('paletteBody').innerHTML = tools.map(t =>
    `<button type="button" aria-label="${t[0]}"><svg viewBox="0 0 18 18">${t[1]}</svg></button>`).join('');
```
